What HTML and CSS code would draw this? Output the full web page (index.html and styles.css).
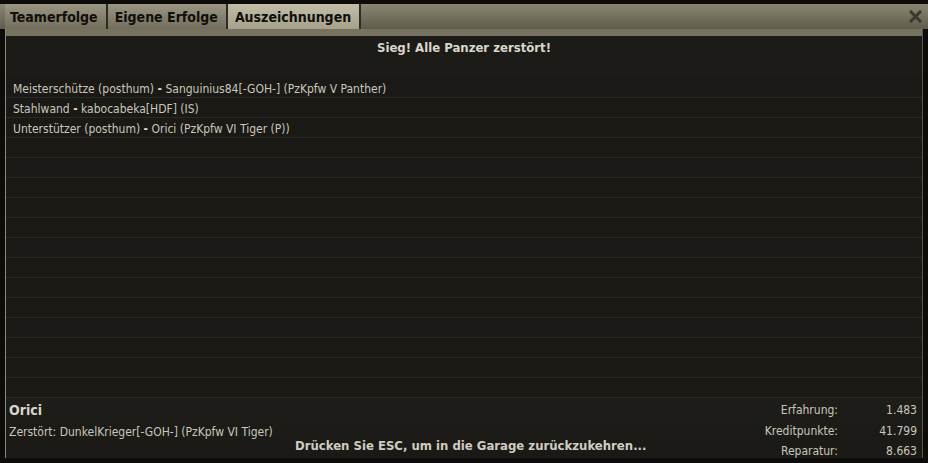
FILE: index.html
```html
<!DOCTYPE html>
<html lang="de">
  <head>
    <meta charset="UTF-8" />
    <title>Auszeichnungen</title>
    <link rel="stylesheet" href="styles.css">
  </head>
  <body>
    <div class="window">
      <div class="tab-bar">
        <div class="tab">Teamerfolge</div>
        <div class="tab">Eigene Erfolge</div>
        <div class="tab active">Auszeichnungen</div>
        <div class="close">
          <svg width="13" height="13" viewBox="0 0 13 13">
            <path d="M2 2 L11 11 M11 2 L2 11" stroke="#3a382f" stroke-width="3" stroke-linecap="square" />
          </svg>
        </div>
      </div>

      <div class="panel">
        <div class="panel-title">Sieg! Alle Panzer zerstört!</div>

        <div class="rows">
          <div class="row">Meisterschütze (posthum) <b>-</b> Sanguinius84[-GOH-] (PzKpfw V Panther)</div>
          <div class="row">Stahlwand <b>-</b> kabocabeka[HDF] (IS)</div>
          <div class="row">Unterstützer (posthum) <b>-</b> Orici (PzKpfw VI Tiger (P))</div>
          <div class="row"></div>
          <div class="row"></div>
          <div class="row"></div>
          <div class="row"></div>
          <div class="row"></div>
          <div class="row"></div>
          <div class="row"></div>
          <div class="row"></div>
          <div class="row"></div>
          <div class="row"></div>
          <div class="row"></div>
          <div class="row"></div>
          <div class="row"></div>
        </div>

        <div class="footer">
          <div class="player">
            <div class="player-name">Orici</div>
            <div class="player-kill">Zerstört: DunkelKrieger[-GOH-] (PzKpfw VI Tiger)</div>
          </div>
          <div class="esc-hint">Drücken Sie ESC, um in die Garage zurückzukehren...</div>
          <div class="stats">
            <div class="stat-label">Erfahrung:</div><div class="stat-value">1.483</div>
            <div class="stat-label">Kreditpunkte:</div><div class="stat-value">41.799</div>
            <div class="stat-label">Reparatur:</div><div class="stat-value">8.663</div>
          </div>
        </div>
      </div>
    </div>
  </body>
</html>
```

FILE: styles.css
```css
/* Page and window frame */
body {
  margin: 0;
  background-color: #0d0c0a;
  font-family: "Liberation Sans Narrow", "DejaVu Sans Condensed", "Liberation Sans", sans-serif;
}

.window {
  width: 928px;
  height: 463px;
  box-sizing: border-box;
  padding-top: 4px;
  display: flex;
  flex-direction: column;
}

/* Tabs */
.tab-bar {
  flex: none;
  height: 25px;
  display: flex;
  align-items: stretch;
  padding-left: 5px;
  background: linear-gradient(#8a8673, #5f5c4c);
}

.tab {
  padding: 0 8px 0 7px;
  display: flex;
  align-items: center;
  font-size: 14px;
  font-weight: bold;
  color: #100f0b;
  background: linear-gradient(#9a9683, #726e5b);
  border-right: 2px solid #2d2b23;
}

.tab:first-child {
  padding-left: 5px;
}

.tab.active {
  background: linear-gradient(#c2bda8, #a19c86);
  margin-bottom: -4px;
  padding-bottom: 4px;
}

.close {
  margin-left: auto;
  margin-right: 6px;
  align-self: center;
  display: flex;
}

/* Inner dark panel */
.panel {
  flex: none;
  height: 429px;
  box-sizing: border-box;
  margin: 0 5px 5px 5px;
  padding-top: 7px;
  background-color: #76725f;
  display: flex;
  flex-direction: column;
  border-left: 1px solid #8d8974;
  border-right: 1px solid #5a5747;
}

.panel-title {
  flex: none;
  height: 42px;
  box-sizing: border-box;
  padding-top: 4px;
  text-align: center;
  font-size: 13px;
  font-weight: bold;
  color: #d9d7cd;
  background-color: #1c1b17;
}

.rows {
  flex: none;
  display: flex;
  flex-direction: column;
  background-color: #1a1915;
}

.row {
  height: 20px;
  box-sizing: border-box;
  padding: 4px 0 0 7px;
  border-bottom: 1px solid #2a2923;
  font-size: 12px;
  color: #c9c7bd;
  white-space: nowrap;
}

.row b {
  font-weight: bold;
  color: #e0ded4;
}

/* Footer with player info and stats */
.footer {
  flex: 1;
  min-height: 0;
  position: relative;
  display: flex;
  align-items: flex-start;
  padding: 4px 5px 0 3px;
  background: linear-gradient(#1e1d19, #1a1915);
}

.player-name {
  font-size: 14px;
  font-weight: bold;
  color: #d9d7cd;
}

.player-kill {
  margin-top: 7px;
  font-size: 12px;
  color: #c9c7bd;
}

.esc-hint {
  position: absolute;
  left: 289px;
  bottom: 5px;
  font-size: 13px;
  font-weight: bold;
  color: #cfcdc2;
}

.stats {
  margin-left: auto;
  margin-top: -2px;
  display: grid;
  grid-template-columns: auto 79px;
  line-height: 20.5px;
  font-size: 12px;
  color: #c9c7bd;
  text-align: right;
}
```
